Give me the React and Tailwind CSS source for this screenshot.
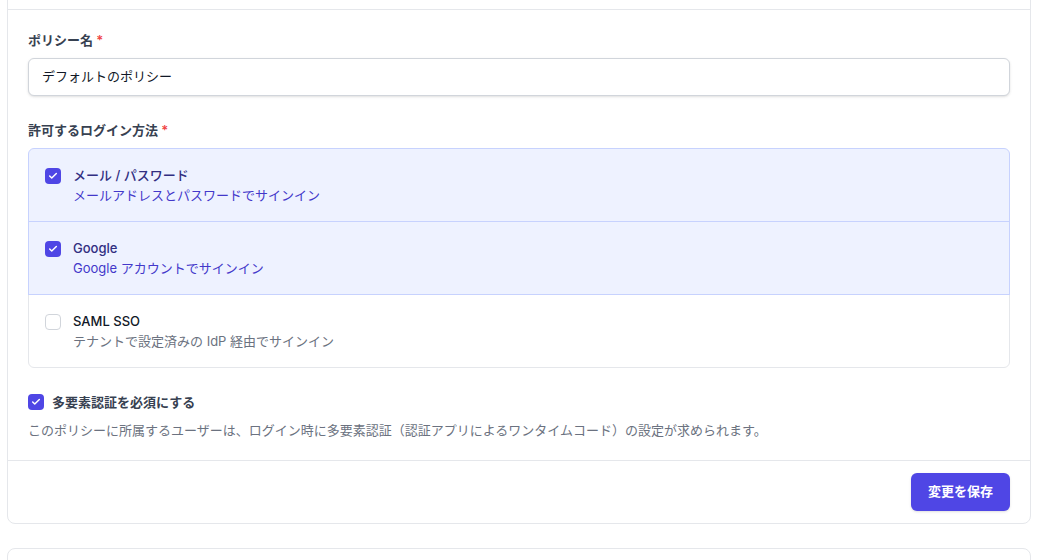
import { Check } from "lucide-react";

const methods = [
  { id: "password", title: "メール / パスワード", desc: "メールアドレスとパスワードでサインイン", checked: true },
  { id: "google", title: "Google", desc: "Google アカウントでサインイン", checked: true },
  { id: "saml", title: "SAML SSO", desc: "テナントで設定済みの IdP 経由でサインイン", checked: false },
];

function Box({ checked }) {
  if (checked) {
    return (
      <span className="flex h-4 w-4 shrink-0 items-center justify-center rounded bg-[#4f46e5]">
        <Check size={10} strokeWidth={3.5} className="text-white" />
      </span>
    );
  }
  return <span className="h-4 w-4 shrink-0 rounded border border-[#d1d5db] bg-white" />;
}

export default function App() {
  return (
    <div
      className="min-h-screen bg-white text-[13px] text-[#111827] overflow-hidden"
      style={{ fontFamily: 'Inter, "Noto Sans CJK JP", sans-serif' }}
    >
      <div className="ml-[7px] w-[1024px] -mt-[47px]">
        {/* Policy card, scrolled so its header sits above the fold */}
        <div className="rounded-lg border border-[#e5e7eb] bg-white">
          <div className="h-[56px] border-b border-[#e5e7eb]" />

          <div className="px-5 pt-5 pb-5">
            <label className="block font-semibold leading-5 text-[#374151]">
              ポリシー名 <span className="text-[#ef4444]">*</span>
            </label>
            <div className="mt-2 flex h-[38px] items-center rounded-md border border-[#d1d5db] bg-white px-[13px] shadow-sm">
              デフォルトのポリシー
            </div>

            <label className="mt-6 block font-semibold leading-5 text-[#374151]">
              許可するログイン方法 <span className="text-[#ef4444]">*</span>
            </label>
            <div className="mt-2 flex flex-col">
              {methods.map((m, i) => (
                <div
                  key={m.id}
                  className={
                    "relative flex gap-3 border px-4 py-4 " +
                    (i > 0 ? "-mt-px " : "") +
                    (i === 0 ? "rounded-t-md " : "") +
                    (i === methods.length - 1 ? "rounded-b-md " : "") +
                    (m.checked ? "z-10 border-[#c7d2fe] bg-[#eef2ff]" : "border-[#e5e7eb] bg-white")
                  }
                >
                  <div className="flex h-5 items-center pt-[2px]">
                    <Box checked={m.checked} />
                  </div>
                  <div className="leading-5">
                    <div className={"font-medium " + (m.checked ? "text-[#312e81]" : "text-[#111827]")}>{m.title}</div>
                    <div className={m.checked ? "text-[#4338ca]" : "text-[#6b7280]"}>{m.desc}</div>
                  </div>
                </div>
              ))}
            </div>

            <div className="mt-6 flex items-center gap-2 leading-5">
              <Box checked />
              <span className="font-semibold text-[#374151]">多要素認証を必須にする</span>
            </div>
            <p className="mt-2 leading-5 text-[#6b7280]">
              このポリシーに所属するユーザーは、ログイン時に多要素認証（認証アプリによるワンタイムコード）の設定が求められます。
            </p>
          </div>

          <div className="flex justify-end border-t border-[#e5e7eb] px-5 py-3">
            <button className="h-[38px] w-[99px] rounded-md bg-[#4f46e5] font-semibold text-white shadow-sm">
              変更を保存
            </button>
          </div>
        </div>

        {/* Next card */}
        <div className="mt-6 h-[200px] rounded-lg border border-[#e5e7eb] bg-white" />
      </div>
    </div>
  );
}
